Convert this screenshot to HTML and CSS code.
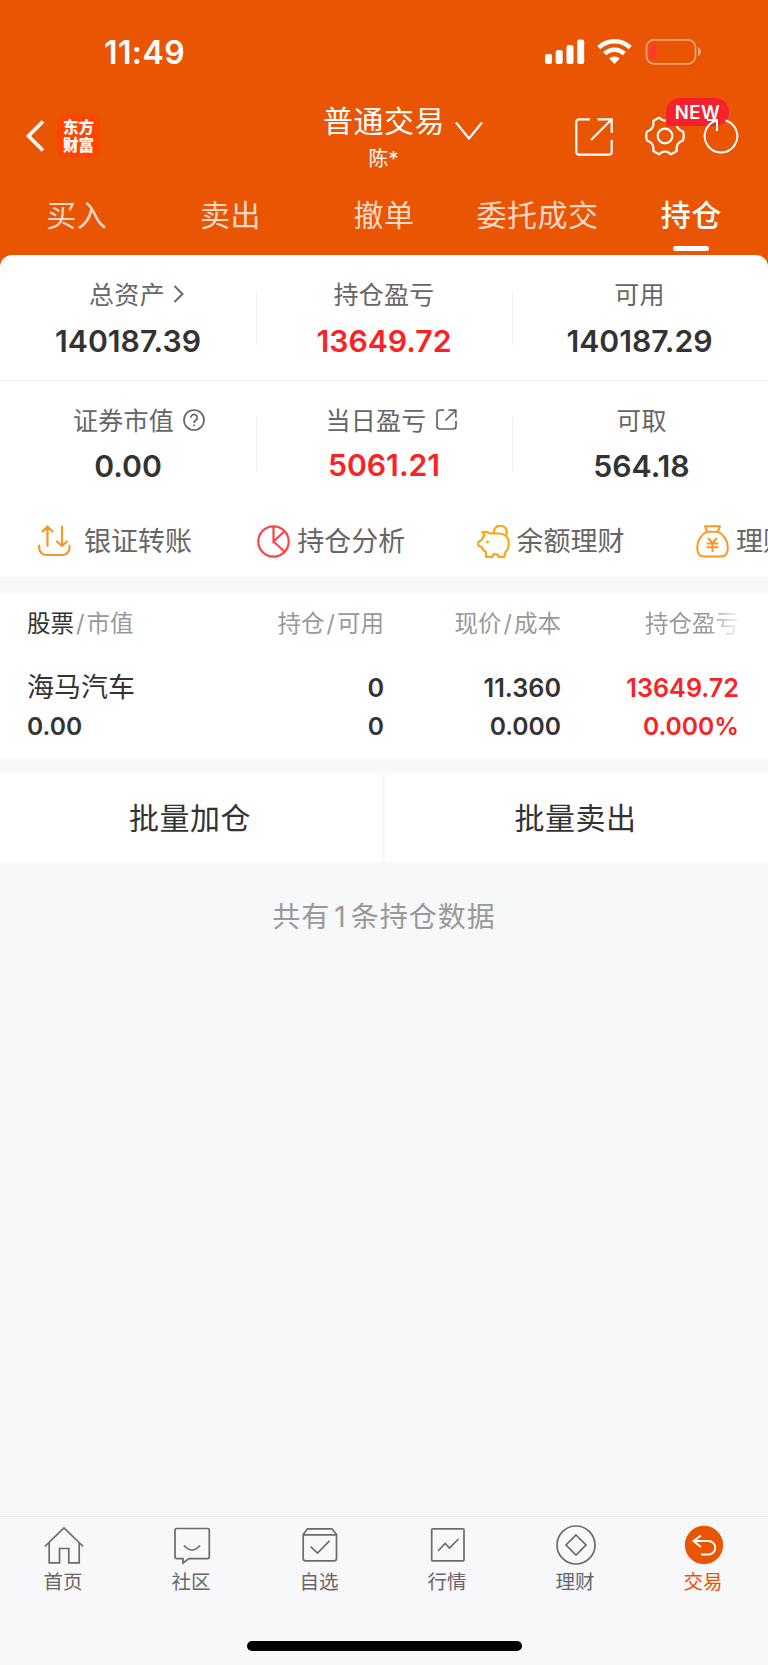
FILE: index.html
```html
<!DOCTYPE html>
<html lang="zh-CN">
<head>
    <meta charset="UTF-8">
    <meta name="viewport" content="width=device-width, initial-scale=1.0">
    <title>普通交易 - 持仓</title>
    <link rel="stylesheet" href="styles.css">
</head>
<body>
    <header class="header">
        <div class="status-bar">
            <span class="time">11:49</span>
            <svg class="status-icons" width="157" height="28" viewBox="0 0 157 28">
                <g fill="#fff">
                    <rect x="0" y="16" width="7" height="10" rx="2"/>
                    <rect x="10.7" y="12" width="7" height="14" rx="2"/>
                    <rect x="21.5" y="7" width="7" height="19" rx="2"/>
                    <rect x="32.2" y="1.5" width="7" height="24.5" rx="2"/>
                    <path d="M69.5 26l-5.3-5.4a8 8 0 0 1 10.6 0z"/>
                </g>
                <g fill="none" stroke="#fff" stroke-width="4.6">
                    <path d="M53.8 9.6a22.5 22.5 0 0 1 31.4 0"/>
                    <path d="M59.6 15.7a14.2 14.2 0 0 1 19.8 0"/>
                </g>
                <rect x="101.5" y="1.8" width="49" height="24" rx="7.5" fill="none" stroke="#f5a67c" stroke-width="1.7"/>
                <path d="M153 9.5c4 1.5 4 7 0 8.5z" fill="#f5a67c"/>
                <rect x="104.5" y="6" width="7" height="15" rx="3.2" fill="#ff3b30"/>
            </svg>
        </div>

        <div class="nav">
            <div class="nav-left">
                <svg width="20" height="34" viewBox="0 0 20 34" fill="none" stroke="#fff" stroke-width="3.6">
                    <path d="M18 2.5L3.5 17L18 31.5"/>
                </svg>
                <div class="logo">东方<br>财富</div>
            </div>
            <div class="nav-title">
                <h1>普通交易
                    <svg width="28" height="20" viewBox="0 0 28 20" fill="none" stroke="#fff" stroke-width="2.2">
                        <path d="M1 1.500L14 17.500L27 1.500"/>
                    </svg>
                </h1>
                <p>陈*</p>
            </div>
            <div class="nav-right">
                <svg width="38" height="38" viewBox="0 0 38 38" fill="none" stroke="#fff" stroke-width="2.2">
                    <path d="M15 1.3H4a2.7 2.7 0 0 0-2.7 2.7V34a2.7 2.7 0 0 0 2.7 2.7H34a2.7 2.7 0 0 0 2.7-2.7V22M22.5 1.3H36.7V15M36.5 1.5L16 22"/>
                </svg>
                <div class="settings">
                    <svg width="40" height="40" viewBox="0 0 40 40" fill="none" stroke="#fff" stroke-width="2.2" stroke-linejoin="round">
                        <path d="M14 1.6C17.500 5.500 22.500 5.500 26 1.600L31.800 5C30.800 10 33 13.800 38 15.500Q39.500 20 38 24.500C33 26.200 30.800 30 31.800 35L26 38.400C22.500 34.500 17.500 34.500 14 38.400L8.200 35C9.200 30 7 26.200 2 24.500Q.5 20 2 15.500C7 13.800 9.200 10 8.200 5Z"/>
                        <circle cx="20" cy="20" r="7.3"/>
                    </svg>
                    <span class="badge">NEW</span>
                </div>
                <svg class="refresh" width="36" height="36" viewBox="0 0 36 36" fill="none" stroke="#fff" stroke-width="2">
                    <path d="M22.5 2.500A16.300 16.300 0 1 1 13.500 2.500M4 2H14V13"/>
                </svg>
            </div>
        </div>

        <nav class="tabs">
            <a>买入</a>
            <a>卖出</a>
            <a>撤单</a>
            <a>委托成交</a>
            <a class="active">持仓</a>
        </nav>
    </header>

    <section class="assets">
        <div class="asset-row">
            <div class="asset">
                <div class="label total">总资产
                    <svg width="11" height="18" viewBox="0 0 11 18" fill="none" stroke="#666" stroke-width="1.9">
                        <path d="M1.5 1L9.5 9L1.5 17"/>
                    </svg>
                </div>
                <div class="value">140187.39</div>
            </div>
            <div class="asset">
                <div class="label">持仓盈亏</div>
                <div class="value red">13649.72</div>
            </div>
            <div class="asset">
                <div class="label">可用</div>
                <div class="value">140187.29</div>
            </div>
        </div>
        <div class="asset-row">
            <div class="asset">
                <div class="label wide">证券市值
                    <svg width="22" height="22" viewBox="0 0 22 22" fill="none" stroke="#666" stroke-width="1.7">
                        <circle cx="11" cy="11" r="10"/>
                        <path d="M7.8 8.7a3.2 3.2 0 1 1 5 2.6c-1.3.9-1.8 1.4-1.8 2.7M11 15.5v1.8"/>
                    </svg>
                </div>
                <div class="value">0.00</div>
            </div>
            <div class="asset">
                <div class="label wide2">当日盈亏
                    <svg width="21" height="21" viewBox="0 0 21 21" fill="none" stroke="#666" stroke-width="1.7">
                        <path d="M8 1.2H4a3 3 0 0 0-3 3V17a3 3 0 0 0 3 3H17a3 3 0 0 0 3-3V12M12.5 1.2H19.8V8.5M19.5 1.5L9.5 11.5"/>
                    </svg>
                </div>
                <div class="value red up">5061.21</div>
            </div>
            <div class="asset shift">
                <div class="label">可取</div>
                <div class="value">564.18</div>
            </div>
        </div>

        <div class="quick">
            <a class="first">
                <svg width="33" height="33" viewBox="0 0 33 33" fill="none" stroke="#f19a2b" stroke-width="2.2" stroke-linecap="round" stroke-linejoin="round">
                    <path d="M1.2 20.5V23a7 7 0 0 0 7 7H24.5a7 7 0 0 0 7-7V20.5M9.5 21V1.5M4.5 6.5L9.5 1.5L14.5 6.5M24 1.5V21M19 16.5L24 21L29 16.5"/>
                </svg>
                <span>银证转账</span>
            </a>
            <a>
                <svg width="33" height="33" viewBox="0 0 33 33" fill="none" stroke="#fb4448" stroke-width="2.2">
                    <circle cx="16.5" cy="16.5" r="15.2"/>
                    <path d="M16.5 1.3V16.5L27.5 6.3M16.5 16.5L27.5 26.5"/>
                </svg>
                <span>持仓分析</span>
            </a>
            <a>
                <svg width="33" height="33" viewBox="0 0 33 33" fill="none" stroke="#fba612" stroke-width="2.2" stroke-linejoin="round">
                    <path d="M5.5 7.2L7.5 10.5C5.8 12.5 5 14.5 4 15.5L1.3 17V20.5L4.5 22C5.5 24.5 7 26 9 27V31.800H15.500L16.500 29.300H20.500L21.500 31.800H27.500L28.500 27C31 24.500 31.800 21.500 31.800 18.500C31.800 12 27.500 8.500 22 8.500H13C11 6.800 9 6.500 5.500 7.200Z"/>
                    <path d="M17 8.500A6.500 6.500 0 1 1 28.500 11"/>
                    <circle cx="10.5" cy="17" r="1" fill="#fba612" stroke-width="1"/>
                </svg>
                <span>余额理财</span>
            </a>
            <a>
                <svg width="33" height="33" viewBox="0 0 33 33" fill="none" stroke="#f8982a" stroke-width="2" stroke-linejoin="round">
                    <path d="M9 1.2H24L21.8 6.7H11.2ZM11.2 6.7C6 9 1.2 15 1.2 22.5C1.2 28.5 3.5 31.5 8 31.5H25C29.5 31.5 31.8 28.5 31.8 22.5C31.8 15 27 9 21.8 6.7M12 13L16.5 18L21 13M10.5 18.5H22.5M10.5 22.3H22.5M16.5 18V27"/>
                </svg>
                <span>理财</span>
            </a>
        </div>
    </section>

    <section class="positions">
        <div class="row head">
            <span><b>股票</b><i>/</i>市值</span>
            <span>持仓<i>/</i>可用</span>
            <span>现价<i>/</i>成本</span>
            <span class="fade">持仓盈亏</span>
        </div>
        <div class="row">
            <span class="name">海马汽车</span>
            <span>0</span>
            <span>11.360</span>
            <span class="red">13649.72</span>
        </div>
        <div class="row second">
            <span>0.00</span>
            <span>0</span>
            <span>0.000</span>
            <span class="red">0.000%</span>
        </div>
    </section>

    <section class="batch">
        <button type="button">批量加仓</button>
        <button type="button">批量卖出</button>
    </section>

    <p class="summary">共有<span>1</span>条持仓数据</p>

    <footer class="tab-bar">
        <a>
            <svg width="40" height="40" viewBox="0 0 40 40">
                <path d="M.8 20.5L20 2L39.2 20.5M5.2 17V36.8H15.5V22.5H24.8V36.8H35.2V17"/>
            </svg>
            <span>首页</span>
        </a>
        <a>
            <svg width="40" height="40" viewBox="0 0 40 40">
                <path d="M4.8 2.5H35.5A1.8 1.8 0 0 1 37.3 4.3V30.8A1.8 1.8 0 0 1 35.5 32.6H17L11 37V32.6H4.8A1.8 1.8 0 0 1 3 30.8V4.3A1.8 1.8 0 0 1 4.8 2.5M12 19.5Q20 28.5 28 19.5"/>
            </svg>
            <span>社区</span>
        </a>
        <a>
            <svg width="40" height="40" viewBox="0 0 40 40">
                <path d="M3.2 8.5L7.5 2.8H32L36.5 8.5V32.5A2.3 2.3 0 0 1 34.2 34.8H5.5A2.3 2.3 0 0 1 3.2 32.5ZM3.2 8.8H36.5M10.5 20.5L17.5 27L29.5 14.8"/>
            </svg>
            <span>自选</span>
        </a>
        <a>
            <svg width="40" height="40" viewBox="0 0 40 40">
                <rect x="3.7" y="2.8" width="32.3" height="32" rx="1"/>
                <path d="M10 25L17.2 17.5L21.5 22L30.5 13"/>
            </svg>
            <span>行情</span>
        </a>
        <a>
            <svg width="40" height="40" viewBox="0 0 40 40">
                <circle cx="20" cy="19" r="19"/>
                <path d="M20 9L30 19L20 29L10 19Z"/>
            </svg>
            <span>理财</span>
        </a>
        <a class="active">
            <svg width="40" height="40" viewBox="0 0 40 40">
                <circle cx="20" cy="19" r="19.2"/>
                <path d="M17 9.5L9.5 15L17 21M9.5 15H24.5A6.7 6.7 0 0 1 24.5 28.5H17"/>
            </svg>
            <span>交易</span>
        </a>
    </footer>
    <div class="home-indicator"></div>
</body>
</html>
```
FILE: styles.css
```css
/* Global Styling */
* {
    box-sizing: border-box;
}

body {
    margin: 0;
    min-height: 1665px;
    display: flex;
    flex-direction: column;
    background-color: #f7f8fa;
    color: #333;
    font-family: Inter, "Noto Sans CJK SC", sans-serif;
    overflow-x: hidden;
}

svg {
    display: block;
    flex: none;
}

h1,
p {
    margin: 0;
    font-weight: 400;
}

.red {
    color: #fa2223;
}

/* Header */
.header {
    height: 271px;
    margin-bottom: -16px;
    background-color: #ea5504;
    color: #fff;
}

.status-bar {
    height: 100px;
    padding: 38px 66px 0 104px;
    display: flex;
    justify-content: space-between;
}

.time {
    font-size: 32px;
    font-weight: 600;
    letter-spacing: 0.4px;
    line-height: 30px;
}

.nav {
    height: 70px;
    padding: 0 29px 0 25px;
    display: grid;
    grid-template-columns: 1fr 120px 1fr;
}

.nav-left {
    display: flex;
    align-items: center;
    gap: 12px;
}

.logo {
    width: 43px;
    height: 42px;
    border-radius: 9px;
    background-color: #ff4400;
    font-family: "Noto Sans CJK SC", sans-serif;
    font-size: 15.5px;
    font-weight: 900;
    line-height: 18px;
    text-align: center;
    padding-top: 2px;
}

.nav-title {
    text-align: center;
    padding-top: 1px;
}

.nav-title h1 {
    display: flex;
    align-items: center;
    gap: 10px;
    margin-left: 1px;
    margin-right: -50px;
    font-size: 30px;
    letter-spacing: 0.5px;
    line-height: 38px;
    white-space: nowrap;
}

.nav-title h1 svg {
    margin-top: 20px;
}

.nav-title p {
    font-size: 20px;
    line-height: 24px;
    margin: 6px 0 0 3px;
}

.nav-right {
    display: flex;
    justify-content: flex-end;
    align-items: center;
}

.nav-right > svg:first-child {
    margin-top: 2px;
}

.settings {
    position: relative;
    margin: 0 18px 0 32px;
}

.badge {
    position: absolute;
    left: 21px;
    top: -18px;
    width: 63px;
    height: 28px;
    border-radius: 14px 14px 14px 0;
    background-color: #f5222d;
    font-size: 18.5px;
    font-weight: 600;
    line-height: 28px;
    text-align: center;
    letter-spacing: 0.5px;
}

.refresh {
    position: relative;
}

.tabs {
    height: 85px;
    display: grid;
    grid-template-columns: repeat(5, 1fr);
    text-align: center;
    font-size: 30px;
    letter-spacing: 0.5px;
    line-height: 40px;
    padding-top: 25px;
    color: #fbd9c6;
}

.tabs .active {
    color: #fff;
    font-weight: 500;
}

.tabs .active::after {
    content: "";
    display: block;
    width: 36px;
    height: 5px;
    margin: 11px auto 0;
    border-radius: 3px;
    background-color: #fff;
}

/* Assets */
.assets {
    height: 322px;
    background-color: #fff;
    border-radius: 12px 12px 0 0;
    overflow: hidden;
}

.asset-row {
    height: 125px;
    display: grid;
    grid-template-columns: 257px 256px 255px;
    padding-top: 23px;
}

.asset-row:first-child {
    height: 126px;
    border-bottom: 1px solid #eff0f2;
}

.asset {
    padding-right: 1px;
    text-align: center;
    background: linear-gradient(#f0f1f3, #f0f1f3) 100% 13px / 1px 54px no-repeat;
}

.asset + .asset {
    padding-right: 2px;
}

.asset:last-child {
    background: none;
}

.asset-row .shift {
    padding: 0 0 0 2px;
}

.label {
    display: flex;
    align-items: center;
    justify-content: center;
    height: 30px;
    font-size: 25px;
    letter-spacing: 0.3px;
    color: #666;
}

.label svg {
    margin: 1px 0 0 9px;
}

.total {
    padding-left: 17px;
}

.label.total svg {
    margin-left: 8px;
}

.wide {
    padding-left: 22px;
}

.wide2 {
    padding-left: 14px;
}

.value {
    margin-top: 15px;
    font-size: 30.2px;
    font-weight: 600;
    line-height: 36px;
}

.asset-row + .asset-row .value {
    margin-top: 14px;
}

.asset-row + .asset-row .up {
    margin-top: 13px;
}

/* Quick links */
.quick {
    height: 71px;
    padding-left: 38px;
    display: flex;
}

.quick a {
    flex: none;
    width: 219.3px;
    display: flex;
    align-items: center;
    gap: 7px;
    font-size: 27px;
    color: #666;
    white-space: nowrap;
}

.quick span {
    padding-bottom: 4px;
}

.quick .first {
    gap: 13px;
}

/* Positions */
.positions {
    height: 164px;
    margin-top: 17px;
    padding: 11px 29px 0 27px;
    background-color: #fff;
}

.row {
    display: grid;
    grid-template-columns: 180px 177px 177px 178px;
    font-size: 25.2px;
    font-weight: 600;
    line-height: 38px;
    text-align: right;
}

.row span:first-child {
    text-align: left;
}

.second {
    font-size: 24.6px;
}

.head {
    margin-bottom: 26px;
    font-size: 23.5px;
    font-weight: 400;
    color: #999;
}

.head b {
    font-weight: 400;
    color: #333;
}

.head i {
    font-style: normal;
    padding: 0 2px;
}

.row .name {
    font-size: 27px;
    font-weight: 400;
}

.fade {
    -webkit-mask-image: linear-gradient(90deg, #000 82%, transparent 102%);
    mask-image: linear-gradient(90deg, #000 82%, transparent 102%);
}

/* Batch Buttons */
.batch {
    height: 89px;
    margin-top: 15px;
    display: grid;
    grid-template-columns: 382px 383px;
    gap: 3px;
}

.batch button {
    border: none;
    padding: 0 2px 4px 0;
    background-color: #fff;
    color: #333;
    font-family: inherit;
    font-size: 30px;
    letter-spacing: 0.5px;
}

.summary {
    margin-top: 35px;
    font-size: 28px;
    letter-spacing: 1px;
    line-height: 40px;
    text-align: center;
    color: #999;
}

.summary span {
    padding: 0 4px;
}

/* Bottom Tab Bar */
.tab-bar {
    height: 125px;
    margin-top: auto;
    padding-top: 9px;
    display: grid;
    grid-template-columns: repeat(6, 1fr);
    border-top: 1px solid #e8e9eb;
    background-color: #f8f8fa;
    color: #666;
    font-size: 19.5px;
    line-height: 26px;
    text-align: center;
}

.tab-bar svg {
    margin: 0 auto 3px;
    overflow: visible;
    fill: none;
    stroke: #6b6b6b;
    stroke-width: 1.7;
}

.tab-bar span {
    padding-right: 2px;
}

.tab-bar .active {
    color: #ea5504;
}

.tab-bar .active svg {
    stroke: #fff;
    stroke-width: 1.9;
}

.tab-bar .active circle {
    fill: #ea5504;
    stroke: none;
}

.home-indicator {
    width: 275px;
    height: 10px;
    margin: 0 auto 14px;
    border-radius: 5px;
    background-color: #000;
}
```
